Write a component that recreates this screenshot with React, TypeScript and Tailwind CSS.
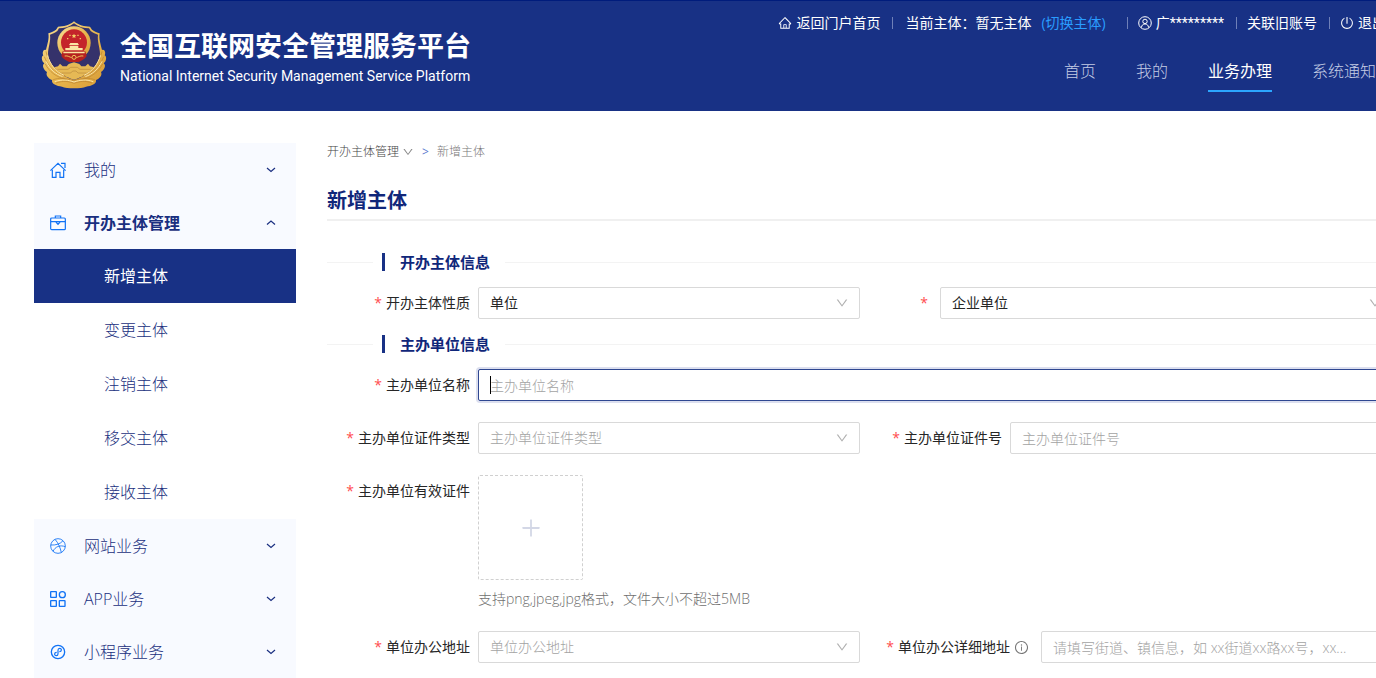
import React from "react";
import {
  AiOutlineDown,
  AiOutlineHome,
  AiOutlineInfoCircle,
  AiOutlinePlus,
  AiOutlinePoweroff,
} from "react-icons/ai";

function Emblem() {
  return (
    <svg viewBox="0 0 228 240" className="h-20 w-[76px] shrink-0" role="img" aria-label="警徽">
      <defs>
        <linearGradient id="gold" x1="0" y1="0" x2="1" y2="1">
          <stop offset="0" stopColor="#f8df9a" />
          <stop offset="0.5" stopColor="#e9b84f" />
          <stop offset="1" stopColor="#d79a35" />
        </linearGradient>
      </defs>
      <path
        d="M114 22 C100 34 82 38 66 38 L60 47 C52 53 44 56 37 58 C40 76 34 90 30 108 C22 104 18 116 22 124 C14 128 18 144 25 148 C16 154 24 170 33 174 C28 184 38 194 48 198 C46 210 62 216 78 218 C92 224 136 224 150 218 C166 216 182 210 180 198 C190 194 200 184 195 174 C204 170 212 154 203 148 C210 144 214 128 206 124 C210 116 206 104 198 108 C194 90 188 76 191 58 C184 56 176 53 168 47 L162 38 C146 38 128 34 114 22 Z"
        fill="url(#gold)"
      />
      <path
        d="M114 28 C101 39 84 43 69 43 L64 51 C57 57 49 60 42 62 C45 82 36 100 36 120 C40 156 72 186 114 198 C156 186 188 156 192 120 C192 100 183 82 186 62 C179 60 171 57 164 51 L159 43 C144 43 127 39 114 28 Z"
        fill="#35326b"
      />
      <path
        d="M54 160 L66 157 L72 149 L80 157 L92 157 L98 150 L114 145 L130 150 L136 157 L148 157 L156 149 L162 157 L174 160 C160 180 138 190 114 197 C90 190 68 180 54 160 Z"
        fill="#e6b955"
      />
      <path d="M64 166 H96 L104 160 H124 L132 166 H164 M76 177 H104 L110 171 H120 L126 177 H152" fill="none" stroke="#b98a3c" strokeWidth="2" />
      <g fill="none" stroke="#b98432" strokeWidth="2">
        <path d="M30 112 C34 136 50 166 88 186 M25 128 C36 156 54 174 82 190 M28 150 C40 174 60 188 92 198" />
        <path d="M198 112 C194 136 178 166 140 186 M203 128 C192 156 174 174 146 190 M200 150 C188 174 168 188 136 198" />
        <path d="M50 198 C68 190 90 192 112 200 C138 192 160 190 178 198 M60 207 C84 199 98 202 114 208 C132 202 146 199 168 207" />
      </g>
      <g fill="none" stroke="#fbe6a8" strokeWidth="3">
        <path d="M34 124 C42 150 58 172 84 184 M30 142 C42 166 58 180 80 188 M194 124 C186 150 170 172 144 184 M198 142 C186 166 170 180 148 188" />
        <path d="M56 203 C78 195 98 198 114 204 C132 198 150 195 172 203" />
      </g>
      <circle cx="114" cy="87" r="50" fill="url(#gold)" />
      <circle cx="114" cy="85" r="39" fill="#c4242b" />
      <path d="M80 112 H148 L152 126 C146 136 136 140 128 144 H100 C92 140 82 136 76 126 Z" fill="#b5201f" />
      <path
        d="M114 59 l2 4 5 .6 -3.500 3.500 1 5 -4.500 -2.400 -4.500 2.400 1 -5 -3.500 -3.500 5 -.6 Z M93 72 h4 v4 h-4 Z M131 72 h4 v4 h-4 Z M100 62 h4 v4 h-4 Z M124 62 h4 v4 h-4 Z"
        fill="#f4cf67"
      />
      <path d="M103 87 H125 L129 93 H99 Z M101 95 H127 V102 H140 V109 H88 V102 H101 Z M82 113 H146 V118 H82 Z" fill="#fae6a4" />
      <circle cx="114" cy="130" r="6" fill="none" stroke="#efc45c" strokeWidth="3" />
      <path d="M86 126 C96 124 102 130 107 131 M142 126 C132 124 126 130 121 131" fill="none" stroke="#efc45c" strokeWidth="3" />
    </svg>
  );
}

type IconProps = { children: React.ReactNode };

function LineIcon({ children }: IconProps) {
  return (
    <svg viewBox="0 0 48 48" className="size-4 shrink-0" fill="none" stroke="currentColor" strokeWidth="3.6" aria-hidden="true">
      {children}
    </svg>
  );
}

const icons = {
  home: (
    <LineIcon>
      <path d="M1 26 L24 4 L47 26 M33 4 H45 V18 M7 23 V46 H18 V31 H30 V46 H41 V23" />
    </LineIcon>
  ),
  briefcase: (
    <LineIcon>
      <rect x="2" y="9" width="44" height="35" rx="3" />
      <path d="M16 9 V3 H32 V9 M2 20 H46 M18 21 L24 28 L30 21" />
    </LineIcon>
  ),
  site: (
    <LineIcon>
      <g strokeWidth="2.6">
        <circle cx="24" cy="24" r="22" />
        <path d="M15 4 C25 15 31 29 34 44 M2 21 C18 22 31 18 39 8 M9 40 C16 26 29 20 46 26" />
      </g>
    </LineIcon>
  ),
  app: (
    <LineIcon>
      <rect x="2" y="2" width="17" height="17" rx="1" strokeWidth="4" />
      <circle cx="37" cy="11" r="9" strokeWidth="4" />
      <rect x="2" y="29" width="17" height="17" rx="1" strokeWidth="4" />
      <rect x="28" y="29" width="17" height="17" rx="1" strokeWidth="4" />
    </LineIcon>
  ),
  mini: (
    <LineIcon>
      <circle cx="24" cy="24" r="20" strokeWidth="4" />
      <path d="M28 23 C36 23 36 13 29 13 C26 13 24 15 24 19 V29 C24 33 22 35 19 35 C12 35 12 25 20 25" />
    </LineIcon>
  ),
};

function Chevron({ up = false }: { up?: boolean }) {
  return (
    <svg viewBox="0 0 10 10" className="size-[10px]" fill="none" stroke="currentColor" strokeWidth="1.2" aria-hidden="true">
      <path d={up ? "M1 6.500 L5 3 L9 6.500" : "M1 3 L5 6.500 L9 3"} />
    </svg>
  );
}

function MenuGroup({ icon, label, open = false }: { icon: React.ReactNode; label: string; open?: boolean }) {
  return (
    <button
      type="button"
      aria-expanded={open}
      className="flex h-[53px] w-full items-center bg-[#f8faff] pr-5 pl-4 text-left text-base text-[#1a2f80]"
    >
      <span className="text-[#1273f5]">{icon}</span>
      <span className={open ? "ml-[18px] flex-1 font-bold" : "ml-[18px] flex-1 font-light"}>{label}</span>
      <Chevron up={open} />
    </button>
  );
}

function Sep() {
  return <span className="h-3 w-px bg-[#6f80b8]" />;
}

function TopBar() {
  return (
    <div className="-mr-[10px] flex h-6 items-center text-sm whitespace-nowrap text-white">
      <a href="#portal" className="flex items-center gap-1">
        <AiOutlineHome className="size-[14px]" aria-hidden="true" />
        返回门户首页
      </a>
      <span className="mx-3 flex"><Sep /></span>
      <span>当前主体：暂无主体</span>
      <a href="#switch" className="ml-[10px] text-[#2a9dff]">(切换主体)</a>
      <span className="mr-[10px] ml-[21px] flex"><Sep /></span>
      <a href="#account" className="flex items-center gap-1">
        <svg viewBox="0 0 14 14" className="size-[14px]" fill="none" stroke="currentColor" strokeWidth="1" aria-hidden="true">
          <circle cx="7" cy="7" r="6.300" />
          <circle cx="7" cy="5.400" r="2.200" />
          <path d="M3.500 11.500 C3.500 6.800 10.500 6.800 10.500 11.500" />
        </svg>
        <span className="font-[Roboto,'Noto_Sans_CJK_SC',sans-serif]">广*********</span>
      </a>
      <span className="mr-[10px] ml-3 flex"><Sep /></span>
      <a href="#link">关联旧账号</a>
      <span className="mr-[10px] ml-3 flex"><Sep /></span>
      <button type="button" className="flex items-center gap-1">
        <AiOutlinePoweroff className="size-[14px]" aria-hidden="true" />
        退出
      </button>
    </div>
  );
}

const navItems = ["首页", "我的", "业务办理", "系统通知"];

function Header() {
  return (
    <header className="flex h-[111px] justify-between border-t border-[#001c7c] bg-[#183185] pl-9">
      <div className="flex items-start gap-2 pt-[13px]">
        <Emblem />
        <div className="pt-3 whitespace-nowrap text-white">
          <h1 className="text-[27px] leading-10 font-bold">全国互联网安全管理服务平台</h1>
          <p className="font-[Roboto,sans-serif] text-sm leading-5">National Internet Security Management Service Platform</p>
        </div>
      </div>
      <div className="flex flex-col items-end pt-[10px]">
        <TopBar />
        <nav className="mt-5 flex gap-10 text-base whitespace-nowrap">
          {navItems.map((item) => (
            <a
              key={item}
              href="#nav"
              className={
                item === "业务办理"
                  ? "h-[37px] border-b-2 border-[#2ba6ff] leading-8 text-white"
                  : "h-[37px] leading-8 font-light text-[#c4cce4]"
              }
            >
              {item}
            </a>
          ))}
        </nav>
      </div>
    </header>
  );
}

const subItems = ["新增主体", "变更主体", "注销主体", "移交主体", "接收主体"];

function Sidebar() {
  return (
    <aside className="w-[262px] shrink-0">
      <MenuGroup icon={icons.home} label="我的" />
      <MenuGroup icon={icons.briefcase} label="开办主体管理" open />
      {subItems.map((item, i) => (
        <a
          key={item}
          href="#menu"
          className={
            i === 0
              ? "flex h-[54px] items-center bg-[#183185] pl-[70px] text-base text-white"
              : "flex h-[54px] items-center pl-[70px] text-base font-light text-[#1a2f80]"
          }
        >
          {item}
        </a>
      ))}
      <MenuGroup icon={icons.site} label="网站业务" />
      <MenuGroup icon={icons.app} label="APP业务" />
      <MenuGroup icon={icons.mini} label="小程序业务" />
    </aside>
  );
}

function SectionTitle({ children }: { children: string }) {
  return (
    <div className="my-[13px] flex h-6 items-center">
      <span className="h-px w-[46px] bg-[#f3f3f3]" />
      <span className="ml-[9px] h-[18px] w-[3px] bg-[#183185]" />
      <h3 className="mr-[15px] ml-[15px] text-[15px] leading-6 font-bold text-[#10277a]">{children}</h3>
      <span className="h-px flex-1 bg-[#f3f3f3]" />
    </div>
  );
}

function Label({ id, text, className, info = false }: { id: string; text?: string; className: string; info?: boolean }) {
  return (
    <label htmlFor={id} className={`flex h-8 shrink-0 items-center justify-end text-sm whitespace-nowrap text-[#262626] ${className}`}>
      <span className="mr-1 text-[#ff4d4f]">*</span>
      {text}
      {info && <AiOutlineInfoCircle className="ml-1 size-[15px] text-[#777]" aria-hidden="true" />}
    </label>
  );
}

function Select({ id, value, placeholder = false }: { id: string; value: string; placeholder?: boolean }) {
  return (
    <div className="relative min-w-0 flex-1">
      <select
        id={id}
        className={`h-8 w-full appearance-none rounded-xs border border-[#d9d9d9] bg-white px-[11px] text-sm outline-none ${
          placeholder ? "font-light text-[#a3a3a3]" : "text-[#262626]"
        }`}
      >
        <option>{value}</option>
      </select>
      <AiOutlineDown className="pointer-events-none absolute top-[9px] right-[11px] size-[14px] text-[#b0b0b0]" aria-hidden="true" />
    </div>
  );
}

const inputClass =
  "h-8 w-full min-w-0 flex-1 rounded-xs border border-[#d9d9d9] bg-white px-[11px] text-sm outline-none placeholder:font-light placeholder:text-[#a3a3a3]";

function Form() {
  return (
    <form>
      <SectionTitle>开办主体信息</SectionTitle>
      <div className="flex">
        <div className="flex w-[533px] shrink-0">
          <Label id="nature" text="开办主体性质" className="w-[151px] pr-2" />
          <Select id="nature" value="单位" />
        </div>
        <Label id="kind" className="w-20 pr-2" />
        <Select id="kind" value="企业单位" />
      </div>
      <SectionTitle>主办单位信息</SectionTitle>
      <div className="flex flex-col gap-[21px]">
        <div className="flex">
          <Label id="name" text="主办单位名称" className="w-[151px] pr-2" />
          <div className="relative flex min-w-0 flex-1">
            <input
              id="name"
              placeholder="主办单位名称"
              className="h-8 w-full rounded-xs border border-[#2f4791] bg-white px-[11px] text-sm caret-transparent shadow-[0_0_0_2px_#dcdfef] outline-none placeholder:font-light placeholder:text-[#a3a3a3]"
            />
            <span className="absolute top-[7px] left-3 h-[18px] w-px bg-black" aria-hidden="true" />
          </div>
        </div>
        <div className="flex">
          <div className="flex w-[533px] shrink-0">
            <Label id="certType" text="主办单位证件类型" className="w-[151px] pr-2" />
            <Select id="certType" value="主办单位证件类型" placeholder />
          </div>
          <Label id="certNo" text="主办单位证件号" className="w-[150px] pr-2" />
          <input id="certNo" placeholder="主办单位证件号" className={inputClass} />
        </div>
        <div className="flex">
          <Label id="upload" text="主办单位有效证件" className="w-[151px] pr-2" />
          <div>
            <button
              id="upload"
              type="button"
              aria-label="上传主办单位有效证件"
              className="flex size-[105px] items-center justify-center rounded-xs border border-dashed border-[#d0d0d0] text-[#d3d7e6]"
            >
              <AiOutlinePlus className="size-6" aria-hidden="true" />
            </button>
            <p className="mt-2 text-sm leading-[22px] font-light text-[#6f6f6f]">支持png,jpeg,jpg格式，文件大小不超过5MB</p>
          </div>
        </div>
        <div className="flex">
          <div className="flex w-[533px] shrink-0">
            <Label id="addr" text="单位办公地址" className="w-[151px] pr-2" />
            <Select id="addr" value="单位办公地址" placeholder />
          </div>
          <Label id="detail" text="单位办公详细地址" className="w-[181px] pr-3" info />
          <input id="detail" placeholder="请填写街道、镇信息，如 xx街道xx路xx号，xx..." className={inputClass} />
        </div>
      </div>
    </form>
  );
}

export default function App() {
  return (
    <div
      lang="zh-CN"
      className="h-screen overflow-hidden bg-white font-['Open_Sans','Noto_Sans_CJK_SC',sans-serif]"
    >
      <Header />
      <div className="flex gap-[31px] pt-8 pl-[34px]">
        <Sidebar />
        <main className="-mr-[17px] min-w-0 flex-1">
          <nav className="flex h-[18px] items-center text-xs">
            <a href="#manage" className="flex items-center gap-[3px] font-light text-[#444]">
              开办主体管理
              <AiOutlineDown className="size-3 text-[#888]" aria-hidden="true" />
            </a>
            <span className="mx-2 text-[#5b7bd0]">&gt;</span>
            <span className="font-light text-[#777]">新增主体</span>
          </nav>
          <h2 className="mt-[26px] mb-[29px] border-b-2 border-[#f0f0f0] pb-1 text-xl leading-7 font-bold text-[#10277a]">新增主体</h2>
          <Form />
        </main>
      </div>
    </div>
  );
}
